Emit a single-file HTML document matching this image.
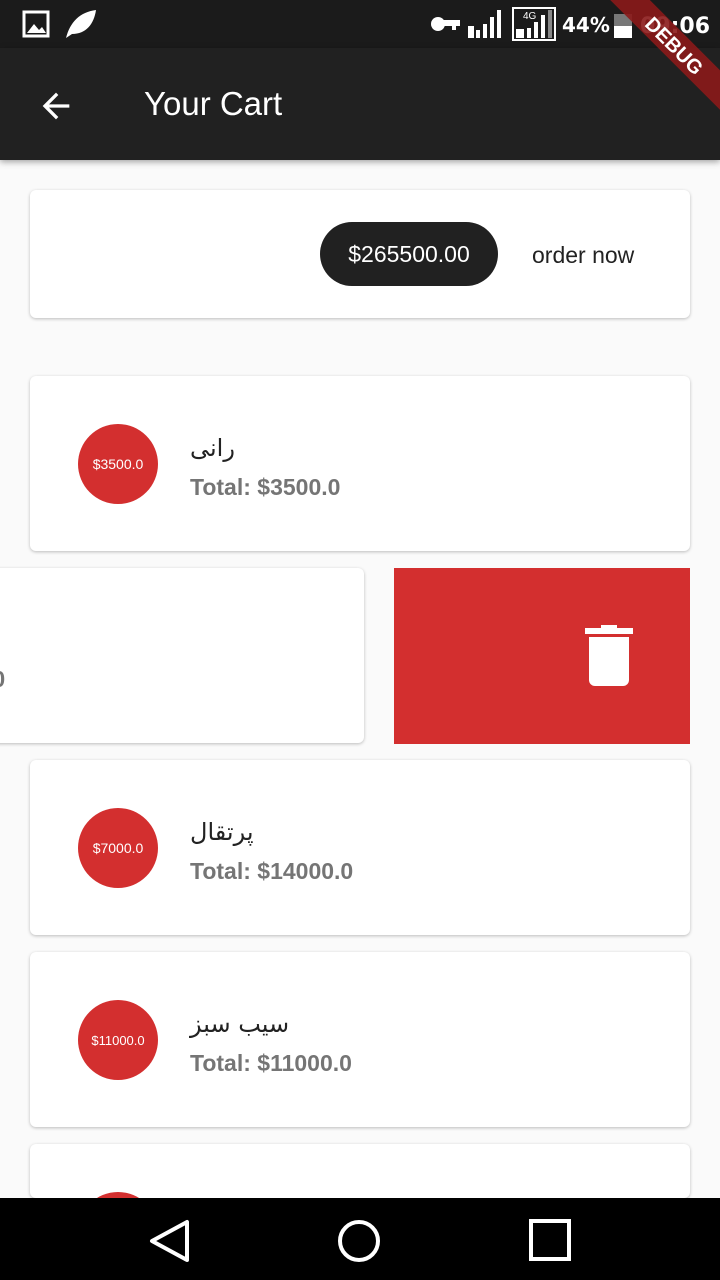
<!DOCTYPE html>
<html style="width:720px;height:1280px;overflow:hidden"><head><meta charset="utf-8"><style>
*{margin:0;padding:0;box-sizing:border-box}
body{width:720px;height:1280px;overflow:hidden;background:#fafafa;font-family:"Liberation Sans","Noto Sans CJK SC",sans-serif;position:relative}
.sb{position:absolute;left:0;top:0;width:720px;height:48px;background:#1b1b1b}
.ab{position:absolute;left:0;top:48px;width:720px;height:112px;background:#212121;box-shadow:0 2px 6px rgba(0,0,0,.35)}
.card{position:absolute;background:#fff;border-radius:6px;box-shadow:0 1px 3px rgba(0,0,0,.25)}
.circ{position:absolute;width:80px;height:80px;border-radius:50%;background:#d32f2f;color:#fff;font-size:14px;display:flex;align-items:center;justify-content:center}
.t{position:absolute;font-size:24px;color:#222;direction:rtl;font-family:"DejaVu Sans",sans-serif}
.tot{position:absolute;font-size:23px;color:#757575;font-weight:bold}
.nav{position:absolute;left:0;top:1198px;width:720px;height:82px;background:#000}
</style></head><body>
<div class="sb">
<svg width="720" height="48" style="position:absolute;left:0;top:0">
<rect x="24" y="12" width="24" height="24" fill="none" stroke="#fff" stroke-width="3"/><path d="M27 33l7-9 5 6 3-3 4 6z" fill="#fff"/>
<path d="M66 38c4-16 14-26 30-28-2 14-10 24-24 24z" fill="#fff"/>
<circle cx="438" cy="24" r="7" fill="#fff"/><rect x="440" y="20" width="20" height="6" fill="#fff"/><rect x="452" y="24" width="4" height="6" fill="#fff"/>
<rect x="468" y="26" width="6" height="12" fill="#fff"/><rect x="476" y="30" width="4" height="8" fill="#fff"/><rect x="483" y="24" width="4" height="14" fill="#fff"/><rect x="490" y="17" width="4" height="21" fill="#fff"/><rect x="497" y="10" width="4" height="28" fill="#fff"/>
<rect x="513" y="8" width="42" height="32" fill="none" stroke="#fff" stroke-width="2"/><text x="523" y="19" fill="#fff" font-size="10" font-family="Liberation Sans">4G</text>
<rect x="516" y="29" width="8" height="9" fill="#fff"/><rect x="527" y="28" width="4" height="10" fill="#fff"/><rect x="534" y="22" width="4" height="16" fill="#fff"/><rect x="541" y="15" width="4" height="23" fill="#fff"/><rect x="548" y="10" width="4" height="28" fill="#888"/>
<text x="562" y="32" fill="#fff" font-size="20" font-weight="bold" font-family="DejaVu Sans">44%</text>
<rect x="614" y="14" width="18" height="12" fill="#777"/><rect x="614" y="26" width="18" height="12" fill="#fff"/>
<text x="640" y="33" fill="#fff" font-size="22" font-weight="bold" font-family="DejaVu Sans">09:06</text>
</svg></div>
<div class="ab">
<svg width="40" height="40" style="position:absolute;left:36px;top:38px" viewBox="0 0 24 24"><path d="M20 11H7.8l5.6-5.6L12 4l-8 8 8 8 1.4-1.4L7.8 13H20z" fill="#fff"/></svg>
<div style="position:absolute;left:144px;top:37px;color:#fff;font-size:33px">Your Cart</div>
</div>
<svg width="120" height="120" style="position:absolute;left:600px;top:0"><g transform="translate(75,45) rotate(45)"><rect x="-90" y="-14" width="180" height="28" fill="#8b1a1a" opacity=".9"/><text x="0" y="8" fill="#fff" font-size="20" font-weight="bold" text-anchor="middle" font-family="Liberation Sans">DEBUG</text></g></svg>
<div class="card" style="left:30px;top:190px;width:660px;height:128px">
<div style="position:absolute;left:290px;top:32px;width:178px;height:64px;border-radius:32px;background:#212121;color:#fff;font-size:23px;display:flex;align-items:center;justify-content:center">$265500.00</div>
<div style="position:absolute;left:502px;top:52px;font-size:23px;color:#222">order now</div>
</div>
<div class="card" style="left:30px;top:376px;width:660px;height:175px">
<div class="circ" style="left:48px;top:48px">$3500.0</div>
<div class="t" style="left:160px;top:58px">رانی</div>
<div class="tot" style="left:160px;top:98px">Total: $3500.0</div></div>
<div style="position:absolute;left:394px;top:568px;width:296px;height:176px;background:#d32f2f">
<svg width="48" height="62" style="position:absolute;left:191px;top:57px"><rect x="0" y="3" width="48" height="6" fill="#fff"/><rect x="16" y="0" width="16" height="6" fill="#fff"/><path d="M4 12h40v43a6 6 0 0 1-6 6H10a6 6 0 0 1-6-6z" fill="#fff"/></svg></div>
<div class="card" style="left:-296px;top:568px;width:660px;height:175px">
<div class="tot" style="left:282px;top:98px">.0</div></div>
<div class="card" style="left:30px;top:760px;width:660px;height:175px">
<div class="circ" style="left:48px;top:48px">$7000.0</div>
<div class="t" style="left:160px;top:58px">پرتقال</div>
<div class="tot" style="left:160px;top:98px">Total: $14000.0</div></div>
<div class="card" style="left:30px;top:952px;width:660px;height:175px">
<div class="circ" style="left:48px;top:48px;font-size:13px">$11000.0</div>
<div class="t" style="left:160px;top:58px">سیب سبز</div>
<div class="tot" style="left:160px;top:98px">Total: $11000.0</div></div>
<div class="card" style="left:30px;top:1144px;width:660px;height:54px;overflow:hidden">
<div class="circ" style="left:48px;top:48px"></div></div>
<div class="nav"><svg width="720" height="82">
<path d="M187 24v38l-35-19z" fill="none" stroke="#fff" stroke-width="4" stroke-linejoin="round"/>
<circle cx="359" cy="43" r="19" fill="none" stroke="#fff" stroke-width="4"/>
<rect x="531" y="23" width="38" height="38" fill="none" stroke="#fff" stroke-width="4"/>
</svg></div>
</body></html>
